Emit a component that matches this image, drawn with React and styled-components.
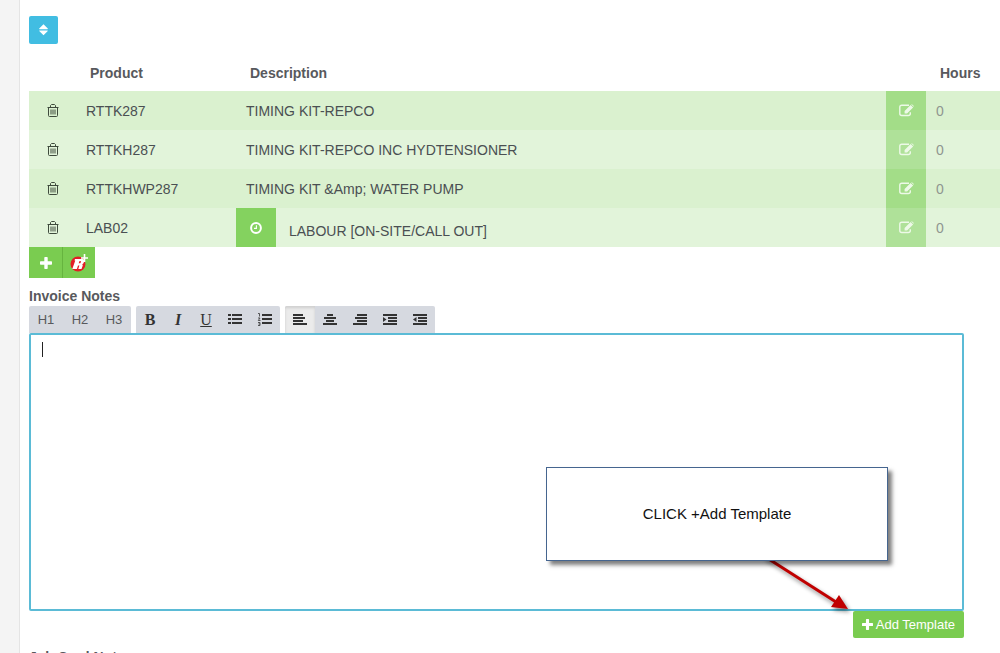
import React, { useState } from 'react';
import styled, { createGlobalStyle } from 'styled-components';

const GlobalStyle = createGlobalStyle`
  * {
    box-sizing: border-box;
  }

  body {
    margin: 0;
    overflow-x: hidden;
    background: #fff;
    color: #58595d;
    font-family: "Liberation Sans", Arial, sans-serif;
    font-size: 14px;
    line-height: 20px;
  }

  button, textarea {
    font: inherit;
  }

  svg {
    display: block;
  }
`;

const Page = styled.div`
  display: flex;
  min-height: 100vh;
`;

const Gutter = styled.aside`
  flex: 0 0 20px;
  background: #f4f4f4;
  border-right: 1px solid #e4e4e4;
`;

const Content = styled.main`
  flex: 1;
  min-width: 0;
  padding: 16px 0 0 9px;
`;

const Button = styled.button`
  display: inline-flex;
  align-items: center;
  justify-content: center;
  border: none;
  padding: 0;
  background: #7acc50;
  color: #fff;
  cursor: pointer;
`;

const SortButton = styled(Button)`
  width: 29px;
  height: 28px;
  border-radius: 2px;
  background: #41bde2;
`;

const ItemsTable = styled.table`
  width: 100%;
  table-layout: fixed;
  border-collapse: collapse;
`;

const HeadCell = styled.th`
  width: ${(props) => props.$width || 'auto'};
  height: 47px;
  padding: 10px 0 0 14px;
  text-align: left;
  font-weight: bold;
`;

const Row = styled.tr`
  height: 39px;
  background: #e2f4da;

  &:nth-child(odd) {
    background: #daf1cf;
  }
`;

const Cell = styled.td`
  padding: ${(props) => (props.$flush ? '0' : '0 0 0 10px')};
  color: ${(props) => (props.$muted ? '#8f9690' : '#4a4f52')};
`;

const DeleteButton = styled(Button)`
  width: 48px;
  height: 39px;
  background: none;
  color: #3e4a3c;
`;

const EditButton = styled(Button)`
  width: 40px;
  height: 39px;
  background: #afe199;
  color: #edf9e8;

  ${Row}:nth-child(odd) & {
    background: #a3dd88;
  }
`;

const Labour = styled.div`
  display: flex;
  align-items: center;
  gap: 13px;
`;

const LabourText = styled.span`
  padding-top: 6px;
`;

const TimeButton = styled(Button)`
  width: 40px;
  height: 39px;
  background: #84d25f;
`;

const AddButtons = styled.div`
  display: flex;
`;

const AddButton = styled(Button)`
  width: 33px;
  height: 31px;

  & + & {
    border-left: 1px solid #66b43f;
  }
`;

const NotesLabel = styled.label`
  display: block;
  margin-top: 8px;
  font-weight: bold;
`;

const Notes = styled.section`
  margin-right: 36px;
`;

const NotesTitle = styled.h4`
  margin: 9px 0 0;
  font-size: 14px;
`;

const Toolbar = styled.div`
  display: flex;
  gap: 5px;
`;

const ToolGroup = styled.div`
  display: flex;
  border-radius: 2px 2px 0 0;
  background: #d6d9e0;
  overflow: hidden;
`;

const Tool = styled(Button)`
  width: ${(props) => props.$width || 30}px;
  height: 27px;
  background: ${(props) => (props.$active ? '#ebebeb' : 'none')};
  box-shadow: ${(props) => (props.$active ? 'inset 0 2px 3px rgba(0, 0, 0, 0.12)' : 'none')};
  color: ${(props) => (props.$heading ? '#58595d' : '#333')};
  font-size: 13px;
`;

const Letter = styled.span`
  font-family: "Liberation Serif", "Times New Roman", serif;
  font-size: 16px;
  font-weight: ${(props) => (props.$plain ? 'normal' : 'bold')};
  font-style: ${(props) => (props.$italic ? 'italic' : 'normal')};
  text-decoration: ${(props) => (props.$underline ? 'underline' : 'none')};
`;

const Editor = styled.div`
  position: relative;
`;

const TextArea = styled.textarea`
  display: block;
  width: 100%;
  height: 278px;
  padding: 6px 12px;
  border: 2px solid #5bbbd6;
  border-radius: 2px;
  outline: none;
  resize: none;
  background: #fff;
  color: #58595d;
`;

const Caret = styled.span`
  position: absolute;
  top: 9px;
  left: 13px;
  width: 1px;
  height: 15px;
  background: #222;
`;

const Callout = styled.div`
  position: absolute;
  z-index: 2;
  top: 134px;
  right: 76px;
  display: flex;
  align-items: center;
  justify-content: center;
  width: 342px;
  height: 94px;
  border: 1px solid #45658f;
  background: #fff;
  box-shadow: 4px 4px 4px rgba(0, 0, 0, 0.5);
  color: #111;
  font-size: 15px;
`;

const Arrow = styled.svg`
  position: absolute;
  z-index: 1;
  top: 222px;
  right: 106px;
  filter: drop-shadow(2px 3px 2px rgba(0, 0, 0, 0.45));
`;

const Actions = styled.div`
  display: flex;
  justify-content: flex-end;
`;

const TemplateButton = styled(Button)`
  gap: 3px;
  height: 27px;
  padding: 0 9px;
  border-radius: 2px;
  font-size: 13px;
`;

const items = [
  { code: 'RTTK287', description: 'TIMING KIT-REPCO' },
  { code: 'RTTKH287', description: 'TIMING KIT-REPCO INC HYDTENSIONER' },
  { code: 'RTTKHWP287', description: 'TIMING KIT &Amp; WATER PUMP' },
  { code: 'LAB02', description: 'LABOUR [ON-SITE/CALL OUT]', labour: true },
];

const SortIcon = () => (
  <svg width="9" height="12" viewBox="0 0 9 12" fill="currentColor">
    <path d="M4.500 .3L8.800 4.600q.2.600-.4.600H.6Q0 5.200.2 4.600zM4.500 11.300L8.800 7q.2-.6-.4-.6H.6Q0 6.400.2 7z" />
  </svg>
);

const PlusIcon = ({ size }) => (
  <svg width={size} height={size} viewBox="0 0 12 12" fill="currentColor">
    <path d="M5 0h2q.7 0 .7.700v3.600h3.600q.7 0 .7.700v2q0 .7-.7.700H7.700v3.600q0 .7-.7.700H5q-.7 0-.7-.7V7.700H.7Q0 7.700 0 7V5q0-.7.700-.7h3.600V.7Q4.300 0 5 0z" />
  </svg>
);

const TrashIcon = () => (
  <svg width="12" height="13" viewBox="0 0 12 13" fill="none" stroke="currentColor">
    <path d="M.5 3.500h11M3.500 3V1.500l1-1h3l1 1V3M1.500 3.500v8q0 1 1 1h7q1 0 1-1v-8M4 5.500v5M6 5.500v5M8 5.500v5" />
  </svg>
);

const EditIcon = () => (
  <svg width="15" height="13" viewBox="0 0 15 13">
    <path
      d="M10 1.200H2.800Q.8 1.200.8 3.200v6.300q0 2 2 2h6.500q2 0 2-2V8.300"
      fill="none"
      stroke="currentColor"
      strokeWidth="1.400"
    />
    <path d="M11.600 .9l2.500 2.500-6 6H5.600V6.900zM12.200.4q.5-.5 1 0l1.400 1.400q.5.500 0 1z" fill="currentColor" />
  </svg>
);

const ClockIcon = () => (
  <svg width="12" height="12" viewBox="0 0 12 12" fill="none" stroke="currentColor">
    <circle cx="6" cy="6" r="4.900" strokeWidth="2" />
    <path d="M6.400 3.200v3.200H4" strokeWidth="1.100" />
  </svg>
);

const RepcoIcon = () => (
  <svg width="20" height="19" viewBox="0 0 20 19">
    <circle cx="9" cy="11" r="7.500" fill="#e31e26" />
    <path
      fill="#fff"
      fillRule="evenodd"
      d="M6 6h7.500q2.300.2 1.600 2.400l-.5 1.600q-.4 1-1.500 1.300.9.300.6 1.400L12.500 16H9.300l1.100-3.400H9L7.900 16H3.300L6.300 7.400H5.500zM10.500 8l-.8 2.300h1q.7 0 .9-.6l.3-.9q.2-.8-.5-.8z"
    />
    <path d="M15.500 1v8M12 5h7" stroke="#fff" strokeWidth="1.600" />
  </svg>
);

const linePaths = {
  left: 'M0 1h10M0 4h12M0 7h10M0 10h14',
  center: 'M4 1h6M1 4h12M3 7h8M0 10h14',
  right: 'M4 1h10M2 4h12M4 7h10M0 10h14',
  indent: 'M0 1h14M5 4h9M5 7h9M0 10h14',
  outdent: 'M0 1h14M5 4h9M5 7h9M0 10h14',
  bullets: 'M0 1h3M4 1h10M0 5h3M4 5h10M0 9h3M4 9h10',
  numbers: 'M4 1h10M4 5h10M4 9h10',
};

const LineIcon = ({ kind }) => (
  <svg width="14" height="11" viewBox="0 0 14 11" overflow="visible">
    <path d={linePaths[kind]} stroke="currentColor" strokeWidth="2" />
    {kind === 'indent' && <path d="M0 3l3.500 2.500L0 8z" fill="currentColor" />}
    {kind === 'outdent' && <path d="M3.500 3L0 5.500 3.500 8z" fill="currentColor" />}
    {kind === 'numbers' && (
      <path
        d="M0-.5h1.500v3M0 4h2L.3 6.500H2.500M0 8.500h2v3H0M.5 10H2"
        stroke="currentColor"
        fill="none"
        strokeWidth=".8"
      />
    )}
  </svg>
);

const aligns = [
  ['left', 'Align left'],
  ['center', 'Align center'],
  ['right', 'Align right'],
  ['indent', 'Indent'],
  ['outdent', 'Outdent'],
];

function App() {
  const [notes, setNotes] = useState('');
  const [align, setAlign] = useState('left');

  return (
    <Page>
      <GlobalStyle />
      <Gutter />
      <Content>
        <SortButton aria-label="Sort">
          <SortIcon />
        </SortButton>

        <ItemsTable>
          <thead>
            <tr>
              <HeadCell $width="47px" />
              <HeadCell $width="160px">Product</HeadCell>
              <HeadCell>Description</HeadCell>
              <HeadCell $width="40px" />
              <HeadCell $width="74px">Hours</HeadCell>
            </tr>
          </thead>
          <tbody>
            {items.map((item) => (
              <Row key={item.code}>
                <Cell $flush>
                  <DeleteButton aria-label="Delete">
                    <TrashIcon />
                  </DeleteButton>
                </Cell>
                <Cell>{item.code}</Cell>
                {item.labour ? (
                  <Cell $flush>
                    <Labour>
                      <TimeButton aria-label="Time">
                        <ClockIcon />
                      </TimeButton>
                      <LabourText>{item.description}</LabourText>
                    </Labour>
                  </Cell>
                ) : (
                  <Cell>{item.description}</Cell>
                )}
                <Cell $flush>
                  <EditButton aria-label="Edit">
                    <EditIcon />
                  </EditButton>
                </Cell>
                <Cell $muted>0</Cell>
              </Row>
            ))}
          </tbody>
        </ItemsTable>

        <AddButtons>
          <AddButton aria-label="Add item">
            <PlusIcon size={12} />
          </AddButton>
          <AddButton aria-label="Add supplier item">
            <RepcoIcon />
          </AddButton>
        </AddButtons>

        <Notes>
          <NotesLabel htmlFor="invoice-notes">Invoice Notes</NotesLabel>
          <Toolbar>
            <ToolGroup>
              <Tool $heading $width={34}>H1</Tool>
              <Tool $heading $width={34}>H2</Tool>
              <Tool $heading $width={34}>H3</Tool>
            </ToolGroup>
            <ToolGroup>
              <Tool $width={28}><Letter>B</Letter></Tool>
              <Tool $width={28}><Letter $italic>I</Letter></Tool>
              <Tool $width={28}><Letter $plain $underline>U</Letter></Tool>
              <Tool aria-label="Bulleted list"><LineIcon kind="bullets" /></Tool>
              <Tool aria-label="Numbered list"><LineIcon kind="numbers" /></Tool>
            </ToolGroup>
            <ToolGroup>
              {aligns.map(([kind, label]) => (
                <Tool key={kind} aria-label={label} $active={align === kind} onClick={() => setAlign(kind)}>
                  <LineIcon kind={kind} />
                </Tool>
              ))}
            </ToolGroup>
          </Toolbar>
          <Editor>
            <TextArea id="invoice-notes" value={notes} onChange={(e) => setNotes(e.target.value)} />
            {!notes && <Caret />}
            <Callout>CLICK +Add Template</Callout>
            <Arrow width="94" height="62" viewBox="0 0 94 62">
              <path d="M0 1L72 47" stroke="#c00000" strokeWidth="3" />
              <path d="M84 54L75 40 67 52z" fill="#c00000" />
            </Arrow>
          </Editor>
          <Actions>
            <TemplateButton>
              <PlusIcon size={11} />
              Add Template
            </TemplateButton>
          </Actions>
          <NotesTitle>Job Card Notes</NotesTitle>
        </Notes>
      </Content>
    </Page>
  );
}

export default App;
